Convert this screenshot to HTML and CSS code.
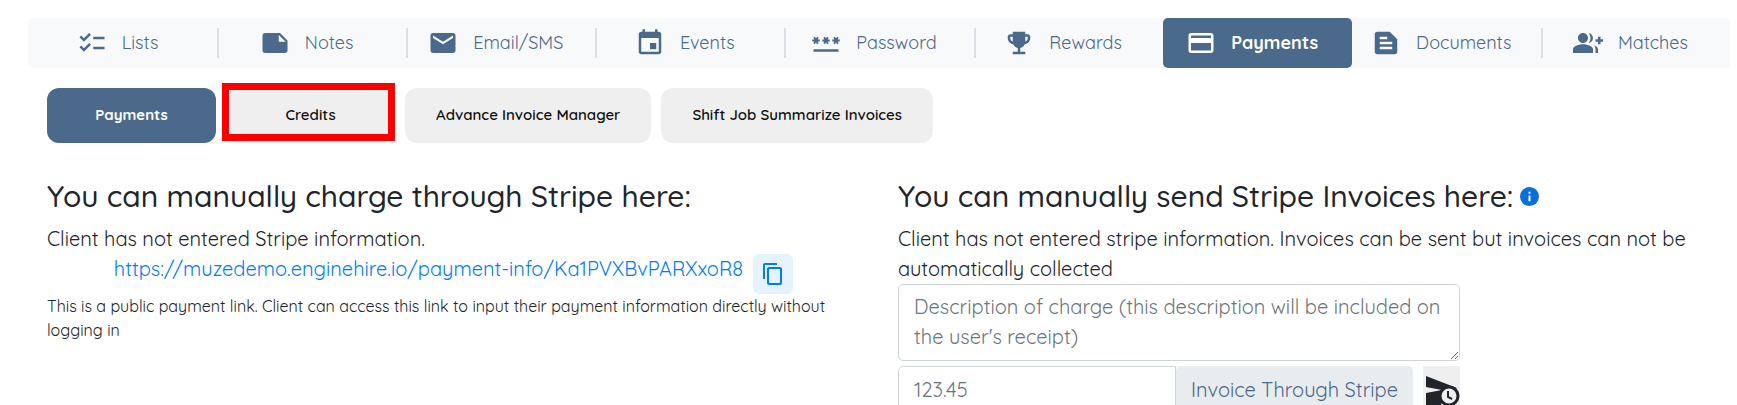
FILE: index.html
```html
<!DOCTYPE html>
<html lang="en">
<head>
    <meta charset="UTF-8">
    <meta name="viewport" content="width=device-width, initial-scale=1.0">
    <title>Payments</title>
    <link rel="stylesheet" href="styles.css">
</head>
<body>
    <nav class="main-nav">
        <a class="nav-item" href="#lists">
            <svg class="icon" viewBox="0 0 24 24"><path d="M22 7h-9v2h9V7zm0 8h-9v2h9v-2zM5.540 11L2 7.460l1.410-1.410 2.120 2.120 4.240-4.240 1.410 1.410L5.540 11zm0 8L2 15.460l1.410-1.410 2.120 2.120 4.240-4.240 1.410 1.410L5.540 19z"/></svg>
            <span>Lists</span>
        </a>
        <a class="nav-item" href="#notes">
            <svg class="icon" viewBox="0 0 24 24"><path d="M22 10l-6-6H4c-1.100 0-2 .9-2 2v12c0 1.100.9 2 2 2h16c1.100 0 2-.9 2-2v-8zm-7-4.500l5.500 5.500H15V5.500z"/></svg>
            <span>Notes</span>
        </a>
        <a class="nav-item" href="#email">
            <svg class="icon" viewBox="0 0 24 24"><path d="M20 4H4c-1.100 0-2 .9-2 2v12c0 1.100.9 2 2 2h16c1.100 0 2-.9 2-2V6c0-1.100-.9-2-2-2zm0 4l-8 5-8-5V6l8 5 8-5v2z"/></svg>
            <span>Email/SMS</span>
        </a>
        <a class="nav-item" href="#events">
            <svg class="icon" viewBox="0 0 24 24"><path d="M17 12h-5v5h5v-5zM16 1v2H8V1H6v2H5c-1.110 0-2 .9-2 2v14c0 1.100.89 2 2 2h14c1.100 0 2-.9 2-2V5c0-1.100-.9-2-2-2h-1V1h-2zm3 18H5V8h14v11z"/></svg>
            <span>Events</span>
        </a>
        <a class="nav-item" href="#password">
            <svg class="icon" viewBox="0 0 24 24"><path d="M2 17h20v2H2v-2zm1.150-4.050L4 11.470l.85 1.480 1.300-.75-.85-1.480H7v-1.500H5.300l.85-1.470L4.850 7 4 8.470 3.150 7l-1.300.75.85 1.470H1v1.500h1.700l-.85 1.480 1.300.75zm6.700-.75l1.300.75.85-1.480.85 1.480 1.300-.75-.85-1.480H15v-1.500h-1.700l.85-1.470-1.300-.75L12 8.470 11.150 7l-1.300.75.85 1.470H9v1.500h1.700l-.85 1.480zM23 9.220h-1.700l.85-1.470-1.300-.75L20 8.470 19.150 7l-1.300.75.85 1.470H17v1.500h1.700l-.85 1.480 1.300.75.85-1.480.85 1.480 1.300-.75-.85-1.480H23v-1.500z"/></svg>
            <span>Password</span>
        </a>
        <a class="nav-item" href="#rewards">
            <svg class="icon" viewBox="0 0 24 24"><path d="M19 5h-2V3H7v2H5c-1.100 0-2 .9-2 2v1c0 2.550 1.920 4.630 4.390 4.940.63 1.500 1.980 2.630 3.610 2.960V19H7v2h10v-2h-4v-3.100c1.630-.33 2.980-1.460 3.610-2.960C19.080 12.630 21 10.550 21 8V7c0-1.100-.9-2-2-2zM5 8V7h2v3.820C5.840 10.400 5 9.300 5 8zm14 0c0 1.300-.84 2.400-2 2.820V7h2v1z"/></svg>
            <span>Rewards</span>
        </a>
        <a class="nav-item active" href="#payments" aria-current="page">
            <svg class="icon" viewBox="0 0 24 24"><path d="M20 4H4c-1.110 0-2 .89-2 2v12c0 1.110.89 2 2 2h16c1.110 0 2-.89 2-2V6c0-1.110-.89-2-2-2zm0 14H4v-6h16v6zm0-10H4V6h16v2z"/></svg>
            <span>Payments</span>
        </a>
        <a class="nav-item" href="#documents">
            <svg class="icon" viewBox="0 0 24 24"><path d="M15 3H5c-1.100 0-2 .9-2 2v14c0 1.100.9 2 2 2h14c1.100 0 2-.9 2-2V9l-6-6zM7 7h6v2H7V7zm10 10H7v-2h10v2zm0-4H7v-2h10v2z"/></svg>
            <span>Documents</span>
        </a>
        <a class="nav-item" href="#matches">
            <svg class="icon" viewBox="0 0 24 24"><path d="M22 9V7h-2v2h-2v2h2v2h2v-2h2V9h-2zM8 12c2.210 0 4-1.790 4-4s-1.790-4-4-4-4 1.790-4 4 1.790 4 4 4zm0 1c-2.670 0-8 1.340-8 4v3h16v-3c0-2.660-5.330-4-8-4zm4.510-8.950C13.430 5.110 14 6.490 14 8s-.57 2.890-1.490 3.950C14.470 11.700 16 10.040 16 8s-1.530-3.700-3.490-3.950zm4.020 9.780C17.420 14.660 18 15.700 18 17v3h2v-3c0-1.450-1.590-2.510-3.470-3.170z"/></svg>
            <span>Matches</span>
        </a>
    </nav>

    <main class="content">
        <div class="sub-tabs">
            <button class="tab active" type="button">Payments</button>
            <button class="tab highlighted" type="button">Credits</button>
            <button class="tab" type="button">Advance Invoice Manager</button>
            <button class="tab" type="button">Shift Job Summarize Invoices</button>
        </div>

        <div class="columns">
            <section>
                <h3>You can manually charge through Stripe here:</h3>
                <p>Client has not entered Stripe information.</p>
                <div class="link-row">
                    <a href="https://muzedemo.enginehire.io/payment-info/Ka1PVXBvPARXxoR8">https://muzedemo.enginehire.io/payment-info/Ka1PVXBvPARXxoR8</a>
                    <button class="copy-btn" type="button" aria-label="Copy link">
                        <svg viewBox="0 0 24 24"><path d="M16 1H4c-1.100 0-2 .9-2 2v14h2V3h12V1zm3 4H8c-1.100 0-2 .9-2 2v14c0 1.100.9 2 2 2h11c1.100 0 2-.9 2-2V7c0-1.100-.9-2-2-2zm0 16H8V7h11v14z"/></svg>
                    </button>
                </div>
                <p class="small">This is a public payment link. Client can access this link to input their payment information directly without logging in</p>
            </section>

            <section>
                <h3 class="with-info">
                    <span>You can manually send Stripe Invoices here:</span>
                    <svg class="info" viewBox="0 0 20 20"><circle cx="10" cy="10" r="10"/><path d="M9 9h2v6H9zM9 5h2v2H9z"/></svg>
                </h3>
                <p>Client has not entered stripe information. Invoices can be sent but invoices can not be automatically collected</p>
                <form class="invoice-form">
                    <textarea rows="2" aria-label="Description of charge" placeholder="Description of charge (this description will be included on the user's receipt)"></textarea>
                    <div class="amount-row">
                        <input type="text" aria-label="Amount" placeholder="123.45">
                        <button class="invoice-btn" type="button">Invoice Through Stripe</button>
                        <button class="schedule-btn" type="button" aria-label="Schedule send">
                            <svg viewBox="0 0 37 46"><path d="M3 9l31 12-11 3-5 14-15 5V26l16-3-16-3z"/><circle class="clock" cx="26" cy="29" r="9"/><path class="hands" d="M25 24v6l4 2"/></svg>
                        </button>
                    </div>
                </form>
            </section>
        </div>
    </main>
</body>
</html>
```
FILE: styles.css
```css
* {
    box-sizing: border-box;
}

body {
    margin: 0;
    padding: 18px 7px 0 28px;
    font-family: Quicksand, Lato, sans-serif;
    font-size: 20px;
    font-weight: 400;
    line-height: 30px;
    color: #212529;
    background: #fff;
}

button,
input,
textarea {
    font: inherit;
}

h3,
p {
    margin: 0;
}

.main-nav {
    display: flex;
    background: #f8f9fb;
    border-radius: 5px;
}

.nav-item {
    position: relative;
    flex: 1 1 0;
    display: flex;
    align-items: center;
    justify-content: center;
    gap: 15px;
    height: 50px;
    padding-right: 10px;
    color: #4b698b;
    font-size: 18px;
    text-decoration: none;
}

/* divider between two items */
.nav-item::after {
    content: "";
    position: absolute;
    right: -2px;
    top: 10px;
    width: 2px;
    height: 30px;
    background: #dcdfe6;
}

.nav-item:last-child::after,
.nav-item.active::after,
.nav-item:has(+ .active)::after {
    display: none;
}

.nav-item.active {
    background: #4b698b;
    border-radius: 5px;
    color: #fff;
    font-weight: 700;
}

.icon {
    width: 30px;
    height: 30px;
    fill: currentColor;
}

.content {
    padding: 20px 11px 0 19px;
}

.sub-tabs {
    display: flex;
    gap: 10px;
}

.tab {
    position: relative;
    min-width: 169px;
    height: 55px;
    padding: 0 31px 2px;
    border: none;
    border-radius: 12px;
    background: #efefef;
    color: #111;
    font-size: 15px;
    font-weight: 600;
}

.tab.active {
    background: #4b698b;
    color: #fff;
    font-weight: 700;
}

.tab.highlighted::after {
    content: "";
    position: absolute;
    top: -5px;
    right: 0;
    bottom: 2px;
    left: -4px;
    border: 7px solid #f00;
}

.columns {
    display: grid;
    grid-template-columns: 1fr 1fr;
    gap: 30px;
    margin-top: 35px;
}

h3 {
    margin-bottom: 10px;
    font-size: 30px;
    font-weight: 500;
    line-height: 36px;
}

.with-info {
    display: flex;
    align-items: center;
    gap: 7px;
}

.info {
    width: 19px;
    height: 19px;
    fill: #0b6fdb;
}

.info path {
    fill: #fff;
}

.link-row {
    display: flex;
    justify-content: center;
    gap: 10px;
    padding-right: 8px;
}

.link-row a {
    color: #007bff;
    text-decoration: none;
}

.copy-btn {
    display: flex;
    align-items: center;
    justify-content: center;
    width: 40px;
    height: 40px;
    padding: 0;
    border: none;
    border-radius: 6px;
    background: #e5f2ff;
}

.copy-btn svg {
    width: 24px;
    height: 24px;
    fill: #007bff;
}

.small {
    font-size: 16px;
    line-height: 24px;
}

.invoice-form {
    max-width: 562px;
}

textarea,
input {
    border: 1px solid #ced4da;
    border-radius: 5px;
    padding: 7px 15px 8px;
    color: #495057;
}

textarea {
    display: block;
    width: 100%;
    margin-bottom: 5px;
}

::placeholder {
    color: #6c757d;
}

.amount-row {
    display: flex;
    height: 48px;
}

.amount-row input {
    flex: 1;
    min-width: 0;
    border-radius: 5px 0 0 5px;
}

.invoice-btn {
    width: 237px;
    padding: 0;
    border: none;
    border-radius: 5px;
    background: #e9ecef;
    color: #4b698b;
}

.schedule-btn {
    width: 37px;
    margin-left: 10px;
    padding: 0;
    border: none;
    background: #efefef;
}

.schedule-btn svg {
    display: block;
    width: 37px;
    height: 46px;
    fill: #212529;
}

.schedule-btn .clock {
    fill: #efefef;
    stroke: #212529;
    stroke-width: 3;
}

.schedule-btn .hands {
    fill: none;
    stroke: #212529;
    stroke-width: 2;
}
```
